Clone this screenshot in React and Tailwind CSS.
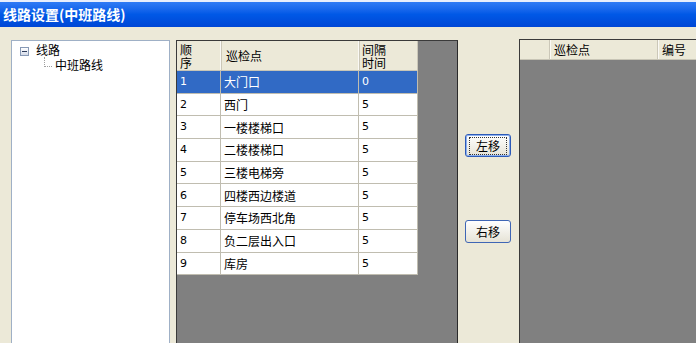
import React from "react";

const rows = [
  { no: "1", name: "大门口", gap: "0" },
  { no: "2", name: "西门", gap: "5" },
  { no: "3", name: "一楼楼梯口", gap: "5" },
  { no: "4", name: "二楼楼梯口", gap: "5" },
  { no: "5", name: "三楼电梯旁", gap: "5" },
  { no: "6", name: "四楼西边楼道", gap: "5" },
  { no: "7", name: "停车场西北角", gap: "5" },
  { no: "8", name: "负二层出入口", gap: "5" },
  { no: "9", name: "库房", gap: "5" },
];

const cjk = { fontFamily: '"Noto Sans CJK SC", "DejaVu Sans", sans-serif' };
const num = { fontFamily: '"DejaVu Sans", "Noto Sans CJK SC", sans-serif' };

const XpButton = ({ label, focused }) => (
  <button
    className={
      "w-[46px] h-[23px] rounded-[3px] border bg-gradient-to-b from-white to-[#e6e3d6] text-[12px] text-black leading-none flex items-center justify-center " +
      (focused ? "border-[#2c5ab8] shadow-[inset_0_0_0_1px_#8cb0ef]" : "border-[#3f66b5]")
    }
    style={cjk}
  >
    <span className={focused ? "px-[6px] py-[2px] border border-dotted border-[#333]" : "px-[7px] py-[3px]"}>{label}</span>
  </button>
);

export default function App() {
  return (
    <div className="w-[696px] h-[343px] overflow-hidden bg-[#ECE9D8] flex flex-col">
      <div className="h-[27px] shrink-0 border-t-2 border-[#e8eefc] bg-gradient-to-b from-[#2f7bf5] via-[#0058e6] to-[#0047d6] flex items-center pl-[3px]">
        <span className="text-white font-bold text-[14px]" style={cjk}>
          线路设置(中班路线)
        </span>
      </div>

      <div className="flex pt-[13px] flex-1 min-h-0">
        {/* tree */}
        <div className="ml-[11px] w-[159px] h-[330px] shrink-0 bg-white border border-[#9fb0c6] relative">
          <div className="flex items-center pl-[8px] pt-[2px] h-[16px]">
            <span className="w-[9px] h-[9px] border border-[#8799b5] bg-gradient-to-b from-white to-[#d4dae8] flex items-center justify-center mt-[3px]">
              <span className="w-[5px] h-px bg-[#2b3a5a]" />
            </span>
            <span className="ml-[7px] text-[12px] text-black leading-none" style={cjk}>线路</span>
          </div>
          <div className="flex items-start pl-[32px] h-[16px]">
            <span className="w-[8px] h-[10px] border-l border-b border-dotted border-[#a0a0a0]" />
            <span className="ml-[3px] text-[12px] text-black leading-none mt-[2px]" style={cjk}>中班路线</span>
          </div>
        </div>

        {/* left grid */}
        <div className="ml-[6px] w-[282px] h-[330px] shrink-0 bg-[#808080] border border-[#3a3a3a] border-r-[#2a2a2a]">
          <div className="w-[241px] bg-white">
            <div className="flex h-[30px] bg-[#ECE9D8] border-b border-[#c8c5b6] text-[12px] text-black" style={cjk}>
              <div className="w-[44px] pl-[3px] leading-[13px] pt-[2px] border-r border-[#faf9f5] shadow-[1px_0_0_#cbc7b8]">
                顺<br />序
              </div>
              <div className="w-[138px] pl-[5px] flex items-center border-r border-[#faf9f5] shadow-[1px_0_0_#cbc7b8]">巡检点</div>
              <div className="w-[59px] pl-[3px] leading-[13px] pt-[2px] border-r border-[#cbc7b8]">
                间隔<br />时间
              </div>
            </div>
            {rows.map((r, i) => {
              const sel = i === 0;
              return (
                <div
                  key={i}
                  className={"flex h-[22.7px] border-b border-[#c0bdb0] text-[12px] " + (sel ? "bg-[#316AC5] text-white" : "bg-white text-black")}
                >
                  <div className="w-[44px] pl-[3px] pt-[1px] flex items-center border-r border-[#c0bdb0] text-[11px]" style={num}>{r.no}</div>
                  <div className="w-[138px] pl-[3px] pt-[1px] flex items-center border-r border-[#c0bdb0]" style={cjk}>{r.name}</div>
                  <div className="w-[59px] pl-[3px] pt-[1px] flex items-center border-r border-[#c0bdb0] text-[11px]" style={num}>{r.gap}</div>
                </div>
              );
            })}
          </div>
        </div>

        {/* move buttons */}
        <div className="w-[61px] shrink-0 flex flex-col pl-[7px] pt-[94px] gap-[63px]">
          <XpButton label="左移" focused />
          <XpButton label="右移" />
        </div>

        {/* right grid */}
        <div className="flex-1 h-[330px] -mt-px bg-[#808080] border-l border-t border-[#3a3a3a]">
          <div className="flex h-[20px] bg-[#ECE9D8] border-b border-[#c8c5b6] text-[12px] text-black" style={cjk}>
            <div className="w-[30px] border-r border-[#cbc7b8] shadow-[1px_0_0_#faf9f5]" />
            <div className="w-[108px] pl-[4px] flex items-center border-r border-[#cbc7b8] shadow-[1px_0_0_#faf9f5]">巡检点</div>
            <div className="pl-[4px] flex items-center">编号</div>
          </div>
        </div>
      </div>
    </div>
  );
}
